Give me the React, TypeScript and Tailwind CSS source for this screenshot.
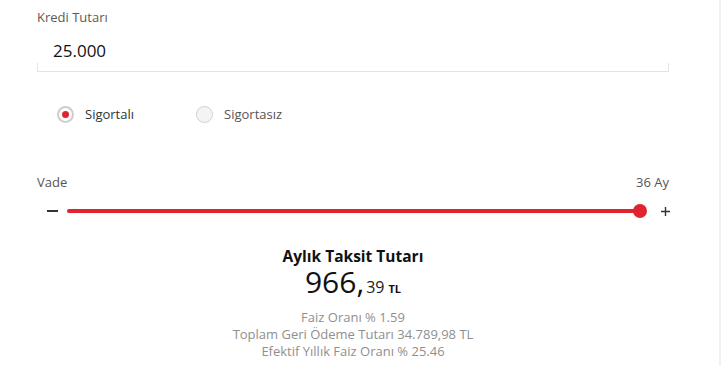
import React, { useState } from 'react';

const font = { fontFamily: '"Open Sans", "Noto Sans", sans-serif' };

function Radio({ label, checked, onClick }: { label: string; checked: boolean; onClick: () => void }) {
  return (
    <button onClick={onClick} className="flex items-center gap-[11px] text-[13px] leading-[18px]">
      <span
        className={`w-[17px] h-[17px] rounded-full flex items-center justify-center ${
          checked ? 'border-2 border-[#d0cccc] bg-white' : 'border-[1.5px] border-[#d2d2d2] bg-[#f4f4f4]'
        }`}
      >
        {checked && <span className="w-[7px] h-[7px] rounded-full bg-[#e0232e]" />}
      </span>
      <span className={checked ? 'text-[#333]' : 'text-[#555]'}>{label}</span>
    </button>
  );
}

export default function App() {
  const [insured, setInsured] = useState(true);
  const term = 36;

  return (
    <div className="flex w-[721px] h-[366px] bg-white overflow-hidden" style={font}>
      <div className="w-[719px] pl-[37px] pr-[50px] pt-[8px]">
        <div className="text-[13px] leading-[18px] text-[#5a5a5a]">Kredi Tutarı</div>
        <div className="mt-[13px] pl-4 text-[17px] leading-6 text-[#111]">25.000</div>
        <div className="h-[9px] border-x border-b border-[#e3e3e3]" />

        <div className="mt-[33px] pl-[20px] flex items-center gap-[62px]">
          <Radio label="Sigortalı" checked={insured} onClick={() => setInsured(true)} />
          <Radio label="Sigortasız" checked={!insured} onClick={() => setInsured(false)} />
        </div>

        <div className="mt-[50px] flex justify-between text-[13px] leading-[18px] text-[#555]">
          <span>Vade</span>
          <span>{term} Ay</span>
        </div>

        <div className="mt-[13px] flex items-center h-[14px]">
          <div className="ml-[10px] w-[11px] h-[1.5px] bg-[#333]" />
          <div className="ml-[9px] flex-1 relative h-[4px] rounded-full bg-[#e0232e]">
            <div className="absolute right-[-7px] top-1/2 -translate-y-1/2 w-[14px] h-[14px] rounded-full bg-[#e0232e]" />
          </div>
          <svg className="ml-[21px] mr-[-1px]" width="9" height="9" viewBox="0 0 9 9">
            <path d="M4.5 0v9M0 4.5h9" stroke="#333" strokeWidth="1.4" />
          </svg>
        </div>

        <div className="mt-[28px] flex flex-col items-center">
          <div className="text-[15.5px] leading-5 font-bold text-[#111]">Aylık Taksit Tutarı</div>
          <div className="flex items-baseline h-8 leading-8 text-[#111]">
            <span className="text-[30px] leading-8 font-medium">966,</span>
            <span className="ml-[2px] text-[16px] leading-8 text-[#222]">39</span>
            <span className="ml-[4px] text-[11px] leading-8 font-bold">TL</span>
          </div>
          <div className="mt-[11px] flex flex-col items-center text-[13px] leading-[17px] text-[#8f8f8f]">
            <span>Faiz Oranı % 1.59</span>
            <span>Toplam Geri Ödeme Tutarı 34.789,98 TL</span>
            <span>Efektif Yıllık Faiz Oranı % 25.46</span>
          </div>
        </div>
      </div>
      <div className="w-[2px] h-full bg-[#f1f1f1]" />
    </div>
  );
}
